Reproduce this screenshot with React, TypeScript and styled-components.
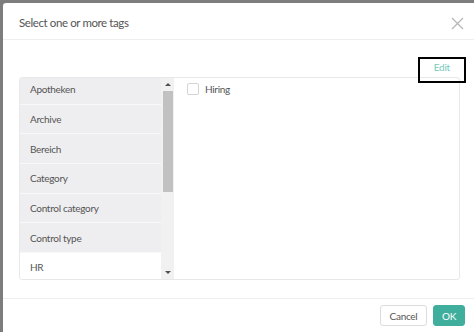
import React from "react";
import styled, { createGlobalStyle } from "styled-components";

const Global = createGlobalStyle`
  html, body { margin: 0; padding: 0; }
  body { background: #808080; font-family: Lato, "Noto Sans", sans-serif; overflow: hidden; }
  * { box-sizing: border-box; }
`;

const Backdrop = styled.div`
  width: 474px;
  height: 332px;
  padding: 3px 0 0 3px;
  background: #7d7d7d;
`;

const Modal = styled.div`
  background: #fff;
  height: 340px;
  border-radius: 3px 0 0 0;
  display: flex;
  flex-direction: column;
`;

const Header = styled.div`
  height: 37px;
  border-bottom: 1px solid #eeeeee;
  display: flex;
  align-items: center;
  justify-content: space-between;
  padding: 0 9px 0 16px;
`;

const Title = styled.h4`
  margin: 0;
  font-size: 11.5px;
  letter-spacing: -0.4px;
  font-weight: 400;
  color: #555;
  padding-top: 2px;
`;

const CloseBtn = styled.button`
  border: none;
  background: none;
  padding: 0;
  width: 16px;
  height: 16px;
  display: flex;
  align-items: center;
  justify-content: center;
  margin-top: 4px;
`;

const Body = styled.div`
  padding: 13px 14px 18px 16px;
  display: flex;
  flex-direction: column;
`;

const Toolbar = styled.div`
  display: flex;
  justify-content: flex-end;
  height: 24px;
  position: relative;
`;

const EditLink = styled.a`
  font-size: 10px;
  letter-spacing: -0.2px;
  color: #74cbbc;
  margin-right: 10px;
  margin-top: 8px;
`;

const Highlight = styled.div`
  position: absolute;
  right: -6px;
  top: 4px;
  width: 48px;
  height: 26px;
  border: 2px solid #000;
`;

const Panels = styled.div`
  display: flex;
  height: 203px;
  border: 1px solid #e8e8e8;
  border-radius: 3px;
  overflow: hidden;
`;

const ListWrap = styled.div`
  display: flex;
  width: 154px;
  flex: none;
`;

const List = styled.div`
  flex: 1;
  overflow: hidden;
`;

const ListInner = styled.div`
  display: flex;
  flex-direction: column;
  margin-top: -3px;
`;

const Item = styled.div<{ $active?: boolean }>`
  height: 29.7px;
  flex: none;
  display: flex;
  align-items: center;
  padding-left: 10px;
  font-size: 10px;
  letter-spacing: -0.3px;
  color: #555;
  background: ${(p) => (p.$active ? "#fff" : "#eeeef0")};
  border-bottom: 1px solid #f8f8f9;
`;

const Scrollbar = styled.div`
  width: 13px;
  flex: none;
  background: #f1f1f1;
  display: flex;
  flex-direction: column;
  align-items: center;
`;

const Arrow = styled.div<{ $down?: boolean }>`
  height: 13px;
  width: 13px;
  display: flex;
  align-items: center;
  justify-content: center;
  &::after {
    content: "";
    border-left: 3px solid transparent;
    border-right: 3px solid transparent;
    ${(p) => (p.$down ? "border-top: 3px solid #505050;" : "border-bottom: 3px solid #505050;")}
  }
`;

const Thumb = styled.div`
  width: 10px;
  height: 101px;
  background: #c1c1c1;
`;

const Spacer = styled.div`
  flex: 1;
`;

const Right = styled.div`
  flex: 1;
  padding: 5px 13px;
`;

const CheckRow = styled.label`
  display: flex;
  align-items: center;
  gap: 6px;
  font-size: 10px;
  letter-spacing: -0.3px;
  color: #555;
`;

const Box = styled.span`
  width: 12px;
  height: 12px;
  border: 1px solid #d4d4d4;
  border-radius: 2px;
  background: #fff;
`;

const Footer = styled.div`
  border-top: 1px solid #eeeeee;
  display: flex;
  justify-content: flex-end;
  gap: 6px;
  padding: 6px 9px 0 0;
`;

const Button = styled.button<{ $primary?: boolean }>`
  height: 21px;
  padding: 0;
  width: ${(p) => (p.$primary ? "32px" : "47px")};
  font-family: inherit;
  font-size: 10px;
  letter-spacing: -0.3px;
  border-radius: 3px;
  border: 1px solid ${(p) => (p.$primary ? "#3fae9d" : "#dcdcdc")};
  background: ${(p) => (p.$primary ? "#3fae9d" : "#fff")};
  color: ${(p) => (p.$primary ? "#fff" : "#555")};
`;

const tags = ["Apotheken", "Archive", "Bereich", "Category", "Control category", "Control type", "HR"];

export default function App() {
  return (
    <>
      <Global />
      <Backdrop>
        <Modal>
          <Header>
            <Title>Select one or more tags</Title>
            <CloseBtn aria-label="Close">
              <svg width="13" height="13" viewBox="0 0 13 13">
                <path d="M1 1L12 12M12 1L1 12" stroke="#b5b5b5" strokeWidth="1.2" />
              </svg>
            </CloseBtn>
          </Header>
          <Body>
            <Toolbar>
              <EditLink>Edit</EditLink>
              <Highlight />
            </Toolbar>
            <Panels>
              <ListWrap>
                <List>
                  <ListInner>
                    {tags.map((t, i) => (
                      <Item key={t} $active={i === tags.length - 1}>
                        {t}
                      </Item>
                    ))}
                  </ListInner>
                </List>
                <Scrollbar>
                  <Arrow />
                  <Thumb />
                  <Spacer />
                  <Arrow $down />
                </Scrollbar>
              </ListWrap>
              <Right>
                <CheckRow>
                  <Box />
                  Hiring
                </CheckRow>
              </Right>
            </Panels>
          </Body>
          <Footer>
            <Button>Cancel</Button>
            <Button $primary>OK</Button>
          </Footer>
        </Modal>
      </Backdrop>
    </>
  );
}
